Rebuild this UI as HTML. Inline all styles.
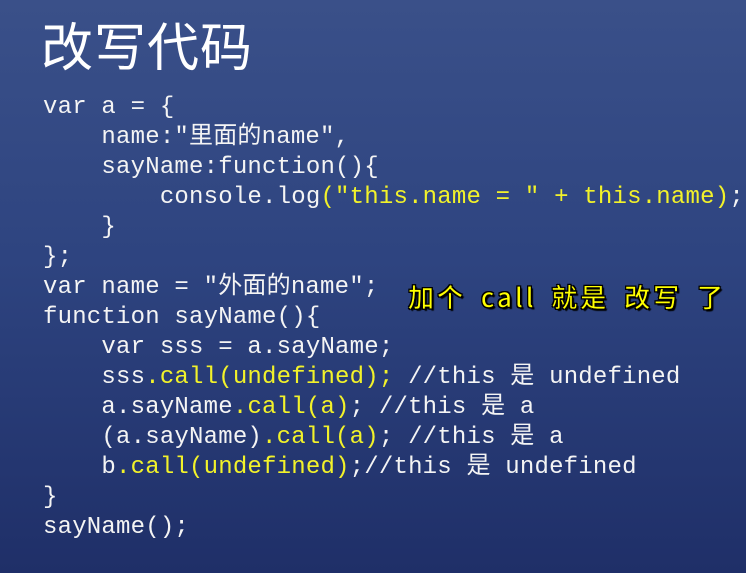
<!DOCTYPE html>
<html><head><meta charset="utf-8"><style>
html,body{margin:0;padding:0}
body{width:746px;height:573px;overflow:hidden;background:linear-gradient(180deg,#3a5089 0%,#2e4480 45%,#1f2f68 100%);position:relative;color:#fff}
.t{position:absolute;left:41px;top:8px;font:52px "Noto Sans CJK SC",sans-serif;color:#fff;line-height:72px;letter-spacing:1px}
.c{position:absolute;left:43px;white-space:pre;font:24px "Liberation Mono","Noto Sans CJK SC",monospace;line-height:30px;color:#f4f4f4;letter-spacing:0.2px}
.y{color:#f2f22a}
.n{position:absolute;left:408px;top:282px;font:500 26px "Noto Sans CJK SC","Liberation Sans",sans-serif;color:#ffff00;-webkit-text-stroke:0.5px #000;text-shadow:1px 1px 0 #000,-1px -1px 0 #000,1px -1px 0 #000,-1px 1px 0 #000,2px 2px 1px #000;white-space:pre;line-height:30px;letter-spacing:3px;word-spacing:6px}
</style></head><body>
<div class="t">改写代码</div>
<div class="c" style="top:93px">var a = {</div>
<div class="c" style="top:123px">    name:"里面的name",</div>
<div class="c" style="top:153px">    sayName:function(){</div>
<div class="c" style="top:183px">        console.log<span class="y">("this.name = " + this.name)</span>;</div>
<div class="c" style="top:213px">    }</div>
<div class="c" style="top:243px">};</div>
<div class="c" style="top:273px">var name = "外面的name";</div>
<div class="c" style="top:303px">function sayName(){</div>
<div class="c" style="top:333px">    var sss = a.sayName;</div>
<div class="c" style="top:363px">    sss<span class="y">.call(undefined);</span> //this 是 undefined</div>
<div class="c" style="top:393px">    a.sayName<span class="y">.call(a)</span>; //this 是 a</div>
<div class="c" style="top:423px">    (a.sayName)<span class="y">.call(a)</span>; //this 是 a</div>
<div class="c" style="top:453px">    b<span class="y">.call(undefined)</span>;//this 是 undefined</div>
<div class="c" style="top:483px">}</div>
<div class="c" style="top:513px">sayName();</div>
<div class="n">加个 call 就是 改写 了</div>
</body></html>
